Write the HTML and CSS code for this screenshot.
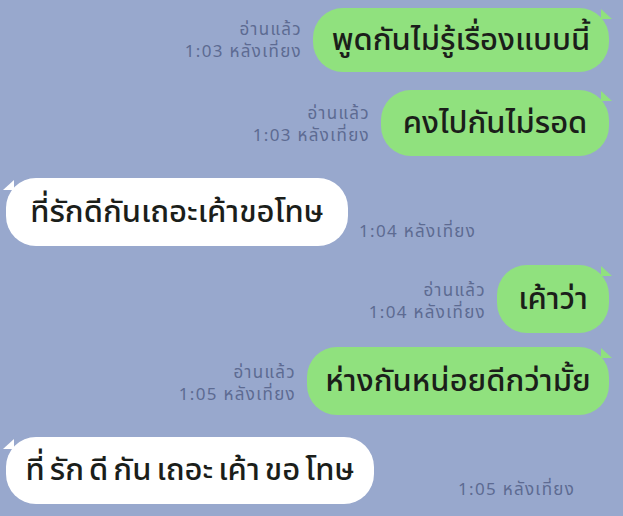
FILE: index.html
```html
<!DOCTYPE html>
<html lang="th">
<head>
<meta charset="utf-8">
<link rel="stylesheet" href="styles.css">
</head>
<body>
<div class="chat">
  <div class="row out r1">
    <div class="meta"><span>อ่านแล้ว</span><span>1:03 หลังเที่ยง</span></div>
    <div class="bubble green w1">พูดกันไม่รู้เรื่องแบบนี้</div>
  </div>
  <div class="row out r2">
    <div class="meta"><span>อ่านแล้ว</span><span>1:03 หลังเที่ยง</span></div>
    <div class="bubble green w2">คงไปกันไม่รอด</div>
  </div>
  <div class="row in r3">
    <div class="bubble white w3">ที่รักดีกันเถอะเค้าขอโทษ</div>
    <div class="meta"><span>1:04 หลังเที่ยง</span></div>
  </div>
  <div class="row out r4">
    <div class="meta"><span>อ่านแล้ว</span><span>1:04 หลังเที่ยง</span></div>
    <div class="bubble green w4">เค้าว่า</div>
  </div>
  <div class="row out r5">
    <div class="meta"><span>อ่านแล้ว</span><span>1:05 หลังเที่ยง</span></div>
    <div class="bubble green w5">ห่างกันหน่อยดีกว่ามั้ย</div>
  </div>
  <div class="row in r6">
    <div class="bubble white w6 spaced">ที่ รัก ดี กัน เถอะ เค้า ขอ โทษ</div>
    <div class="meta far"><span>1:05 หลังเที่ยง</span></div>
  </div>
</div>
</body>
</html>
```
FILE: styles.css
```css
html, body {
  margin: 0;
  padding: 0;
}
body {
  width: 623px;
  height: 516px;
  overflow: hidden;
  background: #98a8cd;
  font-family: "Noto Sans", "Noto Sans Thai", "Loma", "DejaVu Sans", sans-serif;
}
.chat {
  display: flex;
  flex-direction: column;
  padding: 8px 14px 0 6px;
}
.row {
  display: flex;
  align-items: flex-end;
  gap: 11px;
}
.row.out { justify-content: flex-end; }
.row.in { justify-content: flex-start; }
.r2 { margin-top: 18px; }
.r3 { margin-top: 22px; }
.r4 { margin-top: 19px; }
.r5 { margin-top: 14px; }
.r6 { margin-top: 22px; }

.meta {
  display: flex;
  flex-direction: column;
  align-items: flex-end;
  font-size: 17px;
  line-height: 22px;
  letter-spacing: 1.3px;
  color: #5d6b92;
  padding-bottom: 10px;
  white-space: nowrap;
}
.row.in .meta { padding-bottom: 4px; }
.meta.far { margin-left: 73px; padding-bottom: 6px; }

.bubble {
  position: relative;
  box-sizing: border-box;
  height: 66px;
  border-radius: 30px;
  display: flex;
  align-items: center;
  justify-content: center;
  font-size: 31px;
  font-weight: 500;
  color: #1b1e1a;
  white-space: nowrap;
}
.bubble.green { background: #90e17e; }
.bubble.white { background: #ffffff; }
.bubble.green::after {
  content: "";
  position: absolute;
  top: 1px;
  right: -3px;
  border-left: 11px solid #90e17e;
  border-top: 10px solid transparent;
}
.bubble.white::before {
  content: "";
  position: absolute;
  top: 2px;
  left: -3px;
  border-right: 11px solid #ffffff;
  border-top: 10px solid transparent;
}
.w1 { width: 296px; height: 64px; }
.w2 { width: 228px; }
.w3 { width: 342px; height: 68px; }
.w4 { width: 112px; height: 68px; }
.w5 { width: 302px; height: 68px; }
.w6 { width: 368px; height: 67px; }
.spaced { word-spacing: -3px; }
```
